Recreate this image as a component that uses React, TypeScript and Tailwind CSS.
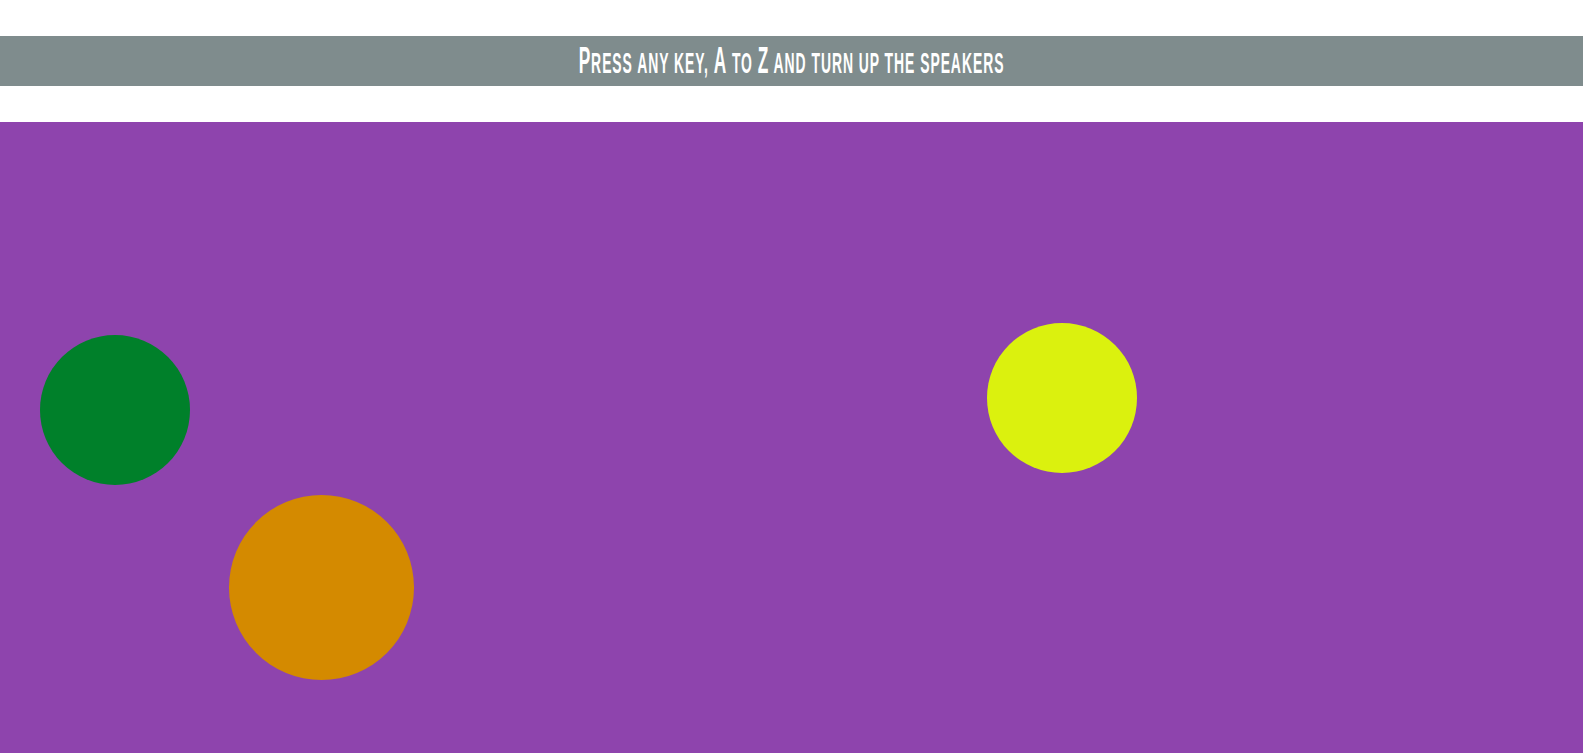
import React from 'react';

type Blob = { left: string; top: string; size: string; color: string };

const blobs: Blob[] = [
  { left: 'left-[40px]', top: 'top-[213px]', size: 'w-[150px] h-[150px]', color: 'bg-[#00802a]' },
  { left: 'left-[229px]', top: 'top-[373px]', size: 'w-[185px] h-[185px]', color: 'bg-[#d48a00]' },
  { left: 'left-[987px]', top: 'top-[201px]', size: 'w-[150px] h-[150px]', color: 'bg-[#dbf10e]' },
];

const Big: React.FC<{ children: React.ReactNode }> = ({ children }) => (
  <span className="text-[36px]">{children}</span>
);

const App: React.FC = () => {
  return (
    <div className="flex flex-col h-screen bg-white overflow-hidden">
      <header className="mt-[36px] h-[50px] bg-[#7f8c8d] flex items-center justify-center">
        <h1 className="inline-block scale-x-[0.48] text-white text-[29px] font-bold leading-none tracking-[2px] uppercase whitespace-nowrap [font-family:'Liberation_Sans',Arial,sans-serif]">
          <Big>P</Big>ress any key, <Big>A</Big> to <Big>Z</Big> and turn up the speakers
        </h1>
      </header>
      <main className="mt-[36px] flex-1 relative bg-[#8e44ad]">
        {blobs.map((b, i) => (
          <div key={i} className={`absolute rounded-full ${b.left} ${b.top} ${b.size} ${b.color}`} />
        ))}
      </main>
    </div>
  );
};

export default App;
